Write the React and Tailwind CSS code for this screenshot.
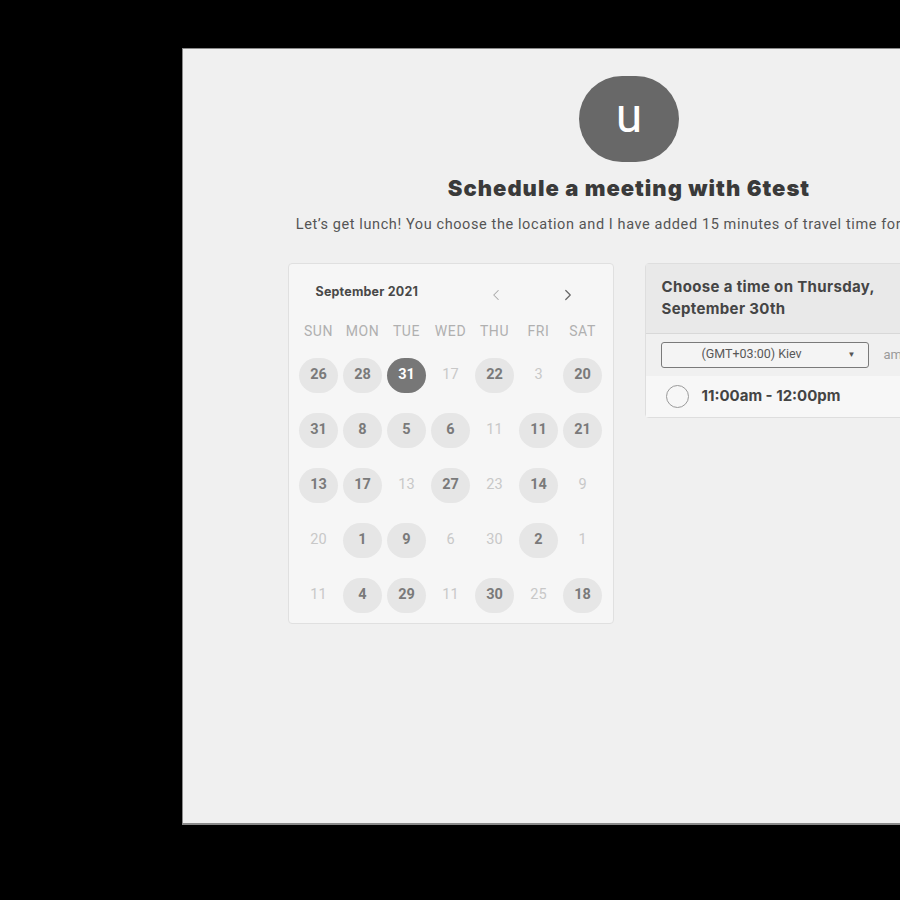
import React from 'react';
import { ChevronLeft, ChevronRight } from 'lucide-react';

const DAYS = ['SUN', 'MON', 'TUE', 'WED', 'THU', 'FRI', 'SAT'];

// c = circled, s = selected, p = plain
const WEEKS = [
  [['26', 'c'], ['28', 'c'], ['31', 's'], ['17', 'p'], ['22', 'c'], ['3', 'p'], ['20', 'c']],
  [['31', 'c'], ['8', 'c'], ['5', 'c'], ['6', 'c'], ['11', 'p'], ['11', 'c'], ['21', 'c']],
  [['13', 'c'], ['17', 'c'], ['13', 'p'], ['27', 'c'], ['23', 'p'], ['14', 'c'], ['9', 'p']],
  [['20', 'p'], ['1', 'c'], ['9', 'c'], ['6', 'p'], ['30', 'p'], ['2', 'c'], ['1', 'p']],
  [['11', 'p'], ['4', 'c'], ['29', 'c'], ['11', 'p'], ['30', 'c'], ['25', 'p'], ['18', 'c']],
];

function DayCell({ label, kind }) {
  if (kind === 'p') {
    return (
      <div className="flex h-[55px] items-center justify-center text-[14.5px] text-[#c8c8c8]">{label}</div>
    );
  }
  return (
    <div className="flex h-[55px] items-center justify-center">
      <div
        className={
          kind === 's'
            ? 'flex h-[35px] w-[39px] items-center justify-center rounded-full bg-[#777777] text-[14.5px] font-bold text-white'
            : 'flex h-[35px] w-[39px] items-center justify-center rounded-full bg-[#e6e6e6] text-[14.5px] font-bold text-[#7a7a7a]'
        }
      >
        {label}
      </div>
    </div>
  );
}

function Calendar() {
  return (
    <div className="h-[361px] w-[326px] shrink-0 rounded-sm border border-[#e0e0e0] bg-[#f6f6f6] px-[8px] font-['Roboto',sans-serif]">
      <div className="flex h-[57px] items-center">
        <span className="ml-[19px] font-['Inter',sans-serif] text-[12.5px] font-bold tracking-[0.2px] text-[#484848]">
          September 2021
        </span>
        <ChevronLeft className="ml-[69px] mt-[6px] h-[18px] w-[18px] text-[#a8a8a8]" strokeWidth={1.4} />
        <ChevronRight className="ml-[54px] mt-[6px] h-[18px] w-[18px] text-[#666666]" strokeWidth={1.6} />
      </div>
      <div className="grid h-[22px] grid-cols-7 items-center text-center text-[14px] tracking-[0.6px] text-[#b0b0b0]">
        {DAYS.map((d) => (
          <div key={d}>{d}</div>
        ))}
      </div>
      <div className="mt-[5px] grid grid-cols-7">
        {WEEKS.flat().map(([label, kind], i) => (
          <DayCell key={i} label={label} kind={kind} />
        ))}
      </div>
    </div>
  );
}

function TimePanel() {
  return (
    <div className="w-[326px] shrink-0 rounded-sm border border-[#dedede] bg-[#f0f0f0] font-['Inter',sans-serif]">
      <div className="flex h-[70px] flex-col justify-center border-b border-[#d8d8d8] bg-[#e9e9e9] px-[16px] text-[15px] font-bold leading-[22px] tracking-[0.35px] text-[#454545]">
        <div>Choose a time on Thursday,</div>
        <div>September 30th</div>
      </div>
      <div className="flex h-[42px] items-center px-[15px]">
        <div className="flex h-[26px] w-[208px] items-center rounded-[3px] border border-[#7a7a7a] bg-[#f4f4f4] font-['Roboto',sans-serif] text-[12.5px] text-[#585858]">
          <span className="ml-[40px]">(GMT+03:00) Kiev</span>
          <span className="ml-auto mr-[12px] text-[8px] text-[#555555]">▼</span>
        </div>
        <span className="ml-[15px] font-['Roboto',sans-serif] text-[13px] text-[#9a9a9a]">am/pm</span>
      </div>
      <div className="flex h-[41px] items-center bg-[#f7f7f7] px-[20px]">
        <div className="h-[23px] w-[23px] rounded-full border-[1.5px] border-[#9a9a9a]" />
        <span className="ml-[13px] text-[15px] font-bold text-[#444444]">11:00am - 12:00pm</span>
      </div>
    </div>
  );
}

export default function App() {
  return (
    <div className="h-[900px] w-[900px] overflow-hidden bg-black">
      <div className="ml-[182px] mt-[48px] flex h-[777px] w-[894px] flex-col items-center border border-b-2 border-[#8a8a8a] bg-[#f0f0f0]">
        <div className="mt-[27px] flex h-[86px] w-[100px] items-center justify-center rounded-full bg-[#686868] font-['Roboto',sans-serif] text-[48px] leading-none text-white">
          <span className="-mt-[6px]">u</span>
        </div>
        <h1 className="mt-[10px] font-['Inter',sans-serif] text-[22px] font-black tracking-[1px] text-[#3a3a3a]">
          Schedule a meeting with 6test
        </h1>
        <p className="mt-[9px] whitespace-nowrap font-['Roboto',sans-serif] text-[14.5px] tracking-[0.6px] text-[#555555]">
          Let’s get lunch! You choose the location and I have added 15 minutes of travel time for us both.
        </p>
        <div className="mt-[27px] flex items-start gap-[31px]">
          <Calendar />
          <TimePanel />
        </div>
      </div>
    </div>
  );
}
